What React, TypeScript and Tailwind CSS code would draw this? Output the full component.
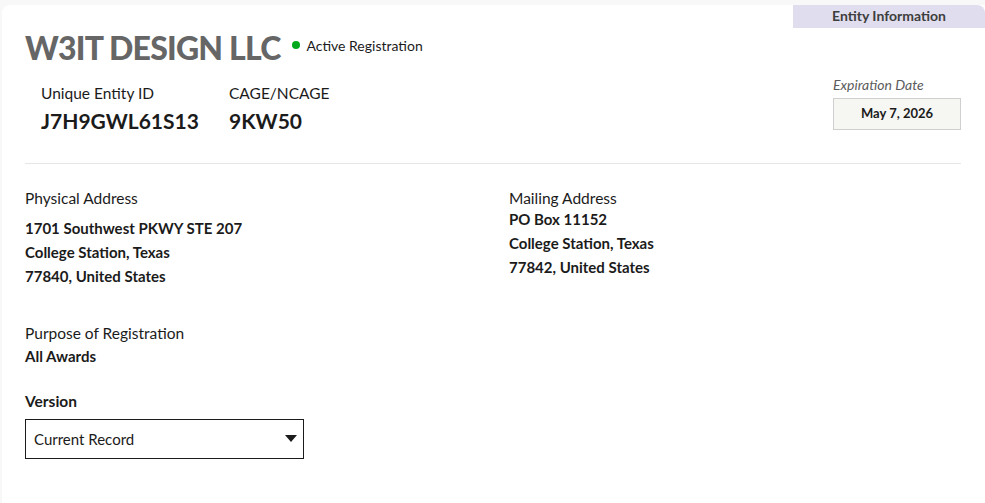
import { useState } from "react";

const font = { fontFamily: "Lato, 'Noto Sans', sans-serif" };

function Field({ label, value, width }: { label: string; value: string; width?: string }) {
  return (
    <div className={`flex flex-col ${width ?? ""}`}>
      <span className="text-[15.5px] leading-[22px] text-[#1b1b1b]">{label}</span>
      <span className="mt-[3px] text-[21px] leading-[28px] font-bold text-[#1b1b1b]">{value}</span>
    </div>
  );
}

function Address({ label, lines, tight }: { label: string; lines: string[]; tight?: boolean }) {
  return (
    <div className="flex flex-col">
      <span className="text-[15.5px] leading-[22px] text-[#1b1b1b]">{label}</span>
      <div className={tight ? "-mt-[2px]" : "mt-[7px]"}>
        {lines.map((l) => (
          <div key={l} className="text-[15px] leading-[24px] font-bold text-[#1b1b1b]">
            {l}
          </div>
        ))}
      </div>
    </div>
  );
}

export default function App() {
  const [version] = useState("Current Record");

  return (
    <div className="h-[503px] w-[985px] overflow-hidden bg-[#f8f8f8] pt-[5px] pl-[2px]" style={font}>
      <div className="h-full rounded-tl-lg bg-white">
        {/* header */}
        <div className="flex">
          <div className="flex-1 pl-[23px] pt-[23px]">
            <div className="flex items-center">
              <h1 className="text-[32px] leading-[40px] font-black tracking-[-0.8px] text-[#666666]">W3IT DESIGN LLC</h1>
              <div className="ml-[12px] flex items-center gap-[6px] pb-[6px]">
                <span className="h-[8px] w-[8px] rounded-full bg-[#00a91c]" />
                <span className="text-[14px] text-[#1b1b1b]">Active Registration</span>
              </div>
            </div>
            <div className="mt-[14px] flex pl-[16px]">
              <Field label="Unique Entity ID" value="J7H9GWL61S13" width="w-[188px]" />
              <Field label="CAGE/NCAGE" value="9KW50" />
            </div>
          </div>
          <div className="flex w-[192px] flex-col">
            <div className="flex h-[23px] items-center justify-center rounded-tr-lg bg-[#e0ddee] pb-[3px] text-[14px] font-bold text-[#3d3d3d]">
              Entity Information
            </div>
            <div className="mt-[48px] pl-[40px]">
              <div className="text-[14px] leading-[18px] italic text-[#5c5c5c]">Expiration Date</div>
              <div className="mt-[4px] flex h-[32px] w-[128px] items-center justify-center border border-[#cfcfcf] bg-[#f6f6f3] text-[13px] font-bold text-[#1b1b1b]">
                May 7, 2026
              </div>
            </div>
          </div>
        </div>

        <div className="px-[23px] pr-[24px]">
          <div className="mt-[28px] h-px bg-[#e6e6e6]" />

          <div className="mt-[23px] grid grid-cols-[484px_1fr]">
            <Address
              label="Physical Address"
              lines={["1701 Southwest PKWY STE 207", "College Station, Texas", "77840, United States"]}
            />
            <Address
              label="Mailing Address"
              tight
              lines={["PO Box 11152", "College Station, Texas", "77842, United States"]}
            />
          </div>

          <div className="mt-[34px] flex flex-col">
            <span className="text-[15.5px] leading-[22px] text-[#1b1b1b]">Purpose of Registration</span>
            <span className="text-[15px] leading-[24px] font-bold text-[#1b1b1b]">All Awards</span>
          </div>

          <div className="mt-[22px] flex flex-col">
            <span className="text-[15.5px] leading-[22px] font-bold text-[#1b1b1b]">Version</span>
            <div className="mt-[7px] flex h-[40px] w-[279px] items-center justify-between border border-[#1b1b1b] pl-[8px] pr-[6px]">
              <span className="text-[15px] text-[#1b1b1b]">{version}</span>
              <svg width="12" height="8" viewBox="0 0 12 8">
                <path d="M0 0h12L6 7z" fill="#1b1b1b" />
              </svg>
            </div>
          </div>
        </div>
      </div>
    </div>
  );
}
